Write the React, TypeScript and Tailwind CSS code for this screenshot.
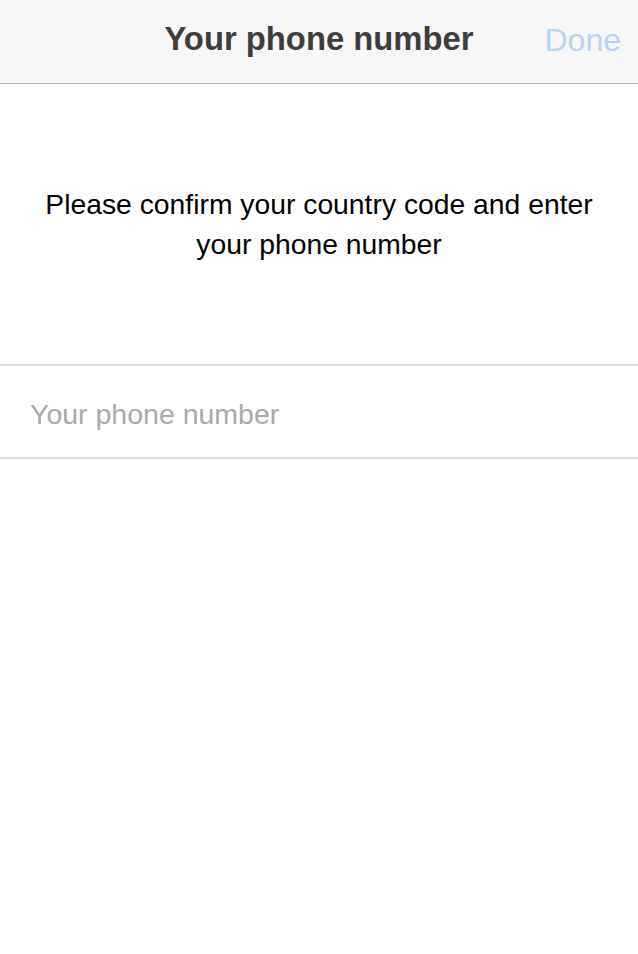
import React from "react";

export default function App() {
  return (
    <div className="w-[638px] h-[954px] bg-white flex flex-col" style={{ fontFamily: '"Liberation Sans", Arial, sans-serif' }}>
      <div className="h-[84px] bg-[#f7f7f7] border-b border-[#b2b2b2] flex items-center relative pb-[4px]">
        <div className="flex-1 text-center text-[32.8px] font-bold text-[#3d3d3d] leading-none">Your phone number</div>
        <div className="absolute right-[17px] text-[32px] text-[#b5d3f7] leading-none">Done</div>
      </div>
      <div className="pt-[100px] px-[40px] text-center text-[28.3px] leading-[40px] text-black">
        Please confirm your country code and enter your phone number
      </div>
      <div className="mt-[100px] h-[95px] border-y-2 border-[#dcdcdc] flex items-center px-[30px] pt-[5px]">
        <input
          className="w-full outline-none text-[28.5px] text-black placeholder:text-[#aaaaaa] bg-transparent"
          placeholder="Your phone number"
        />
      </div>
    </div>
  );
}
